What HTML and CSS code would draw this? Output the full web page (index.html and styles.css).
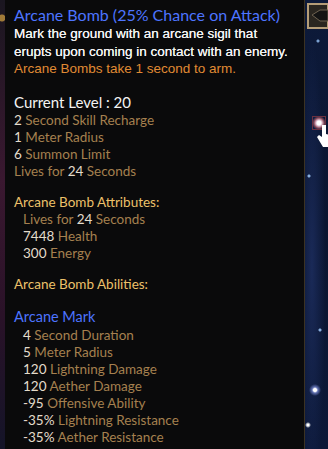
FILE: index.html
```html
<!DOCTYPE html>
<html lang="en">
<head>
  <meta charset="UTF-8">
  <meta name="viewport" content="width=device-width, initial-scale=1.0">
  <title>Arcane Bomb</title>
  <link rel="stylesheet" href="styles.css">
</head>
<body>

  <div class="scene">
    <div class="edge-left"></div>

    <!-- Skill tooltip -->
    <div class="tooltip">
      <div class="tip-title">Arcane Bomb (25% Chance on Attack)</div>
      <div class="tip-desc">Mark the ground with an arcane sigil that<br>erupts upon coming in contact with an enemy.</div>
      <div class="tip-note">Arcane Bombs take 1 second to arm.</div>

      <div class="tip-level">Current Level : 20</div>
      <div class="stat"><span class="num">2</span> Second Skill Recharge</div>
      <div class="stat"><span class="num">1</span> Meter Radius</div>
      <div class="stat"><span class="num">6</span> Summon Limit</div>
      <div class="stat">Lives for <span class="num">24</span> Seconds</div>

      <div class="tip-heading">Arcane Bomb Attributes:</div>
      <div class="stat indent">Lives for <span class="num">24</span> Seconds</div>
      <div class="stat indent"><span class="num">7448</span> Health</div>
      <div class="stat indent"><span class="num">300</span> Energy</div>

      <div class="tip-heading">Arcane Bomb Abilities:</div>

      <div class="tip-sub">Arcane Mark</div>
      <div class="stat indent"><span class="num">4</span> Second Duration</div>
      <div class="stat indent"><span class="num">5</span> Meter Radius</div>
      <div class="stat indent"><span class="num">120</span> Lightning Damage</div>
      <div class="stat indent"><span class="num">120</span> Aether Damage</div>
      <div class="stat indent"><span class="num">-95</span> Offensive Ability</div>
      <div class="stat indent"><span class="num">-35%</span> Lightning Resistance</div>
      <div class="stat indent"><span class="num">-35%</span> Aether Resistance</div>
    </div>

    <!-- starry map behind the tooltip -->
    <div class="edge-right">
      <div class="frame-btn">
        <svg width="22" height="28" viewBox="0 0 22 28">
          <path d="M2 2 H22 V26 H2 Z" fill="#2a2620" stroke="#b59d78" stroke-width="2"/>
          <path d="M6 13 L14 8 H22 V19 H14 Z" fill="#141414" stroke="#6e6250" stroke-width="1"/>
        </svg>
      </div>
      <div class="star-glow"></div>
      <svg class="cursor" width="14" height="24" viewBox="0 0 14 24">
        <path d="M5 0 V12 L2 10 L0 12 L6 22 H14 V10 L9 9 V0 Z" fill="#ffffff"/>
      </svg>
    </div>
  </div>

</body>
</html>
```

FILE: styles.css
```css
body {
  margin: 0;
  padding: 0;
  background-color: #0b1428;
  overflow: hidden;
}
.scene {
  display: flex;
  width: 328px;
  height: 449px;
  overflow: hidden;
}
.edge-left {
  width: 5px;
  flex-shrink: 0;
  background:
    radial-gradient(circle at 2px 18px, #a07a38 0 3px, transparent 4px),
    linear-gradient(180deg, #1a1620 0%, #3a1830 40%, #2a1228 70%, #141428 100%);
}
.tooltip {
  width: 290px;
  flex-shrink: 0;
  padding: 5px 0 0 9px;
  background-color: #0a0a0b;
  border-right: 1px solid #3b3222;
  font-family: "Lato", "Liberation Sans", sans-serif;
  color: #a5804f;
  font-size: 13.5px;
  line-height: 17px;
  box-sizing: content-box;
}
.tip-title {
  color: #4d74ff;
  font-size: 16px;
  line-height: 20px;
}
.tip-desc {
  font-family: "Liberation Sans", Arial, sans-serif;
  color: #f2f2f2;
  font-size: 13.5px;
  line-height: 17.5px;
  text-shadow: 0 0 0.6px #ffffff;
}
.tip-note {
  font-family: "Liberation Sans", Arial, sans-serif;
  color: #e08a34;
  font-size: 13.5px;
  line-height: 17.5px;
}
.tip-level {
  margin-top: 14px;
  color: #f4f4f4;
  font-size: 15px;
  line-height: 20px;
}
.tip-heading {
  margin-top: 14px;
  color: #edc16a;
  font-size: 13.5px;
}
.tip-sub {
  margin-top: 14.5px;
  color: #4d74ff;
  font-size: 14.5px;
  line-height: 20px;
}
.stat .num {
  color: #e4dccb;
}
.indent {
  padding-left: 9px;
}
.edge-right {
  position: relative;
  flex: 1;
  background:
    radial-gradient(circle at 13px 41px, #7aa0d0 0 1px, transparent 2px),
    radial-gradient(circle at 4px 176px, #8ab0e0 0 1px, transparent 2px),
    radial-gradient(circle at 15px 330px, #8ab0e0 0 1px, transparent 2px),
    radial-gradient(circle at 10px 390px, #ffffff 0 1.5px, #6070b0 3px, transparent 6px),
    radial-gradient(circle at 3px 425px, #ffffff 0 1px, transparent 3px),
    radial-gradient(ellipse at 30% 60%, #1a2a58 0%, transparent 60%),
    linear-gradient(180deg, #0d1a3a 0%, #0a1530 50%, #0c1838 100%);
}
.frame-btn {
  position: absolute;
  left: 1px;
  top: 2px;
  line-height: 0;
}
.star-glow {
  position: absolute;
  left: 7px;
  top: 116px;
  width: 12px;
  height: 12px;
  background: radial-gradient(circle, #ffffff 0 2px, #e0c0d0 3px, #8a4a5a 5px, transparent 7px);
  border: 1px solid #6a3040;
}
.cursor {
  position: absolute;
  left: 12px;
  top: 125px;
}
```
